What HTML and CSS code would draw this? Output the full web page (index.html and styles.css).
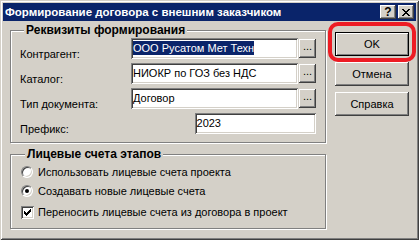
FILE: index.html
```html
<!DOCTYPE html>
<html lang="ru">
  <head>
    <meta charset="UTF-8" />
    <title>Формирование договора с внешним заказчиком</title>
    <link rel="stylesheet" href="styles.css">
  </head>
  <body>
    <div class="window">
      <div class="titlebar">
        <span class="title">Формирование договора с внешним заказчиком</span>
        <div class="caption-btns">
          <div class="cbtn help">?</div>
          <div class="cbtn">
            <svg width="8" height="7" viewBox="0 0 8 7" shape-rendering="crispEdges">
              <path fill="#000" d="M0 0h2v1H0zM6 0h2v1H6zM1 1h2v1H1zM5 1h2v1H5zM2 2h4v1H2zM3 3h2v1H3zM2 4h4v1H2zM1 5h2v1H1zM5 5h2v1H5zM0 6h2v1H0zM6 6h2v1H6z"/>
            </svg>
          </div>
        </div>
      </div>

      <div class="content">
        <div class="main">
          <!-- реквизиты -->
          <fieldset class="group group-req">
            <legend>Реквизиты формирования</legend>
            <div class="row">
              <label class="lbl">Контрагент:</label>
              <div class="edit"><span class="sel">ООО Русатом Мет Техн</span></div>
              <div class="dots">...</div>
            </div>
            <div class="row">
              <label class="lbl">Каталог:</label>
              <div class="edit">НИОКР по ГОЗ без НДС</div>
              <div class="dots">...</div>
            </div>
            <div class="row">
              <label class="lbl">Тип документа:</label>
              <div class="edit">Договор</div>
              <div class="dots">...</div>
            </div>
            <div class="row">
              <label class="lbl">Префикс:</label>
              <div class="edit edit-short">2023</div>
            </div>
          </fieldset>

          <!-- лицевые счета -->
          <fieldset class="group group-acc">
            <legend>Лицевые счета этапов</legend>
            <div class="opt opt-first">
              <span class="radio"></span>
              <span>Использовать лицевые счета проекта</span>
            </div>
            <div class="opt">
              <span class="radio on"></span>
              <span>Создавать новые лицевые счета</span>
            </div>
            <div class="opt opt-check">
              <span class="check">
                <svg width="7" height="7" viewBox="0 0 7 7" shape-rendering="crispEdges">
                  <path fill="#000" d="M6 0h1v1H6zM5 1h2v1H5zM0 2h1v1H0zM4 2h3v1H4zM0 3h2v1H0zM3 3h3v1H3zM0 4h5v1H0zM1 5h3v1H1zM2 6h1v1H2z"/>
                </svg>
              </span>
              <span>Переносить лицевые счета из договора в проект</span>
            </div>
          </fieldset>
        </div>

        <div class="side">
          <div class="btn default">OK</div>
          <div class="btn">Отмена</div>
          <div class="btn">Справка</div>
        </div>
      </div>

      <div class="mark"></div>
    </div>
  </body>
</html>
```

FILE: styles.css
```css
* {
  box-sizing: border-box;
}
body {
  margin: 0;
  background: #d4d0c8;
  font-family: "Liberation Sans", Arial, sans-serif;
  font-size: 11px;
  color: #000;
}
.window {
  position: relative;
  width: 419px;
  height: 240px;
  padding: 3px;
  background: #d4d0c8;
  box-shadow: inset 1px 1px #d4d0c8, inset -1px -1px #404040,
    inset 2px 2px #fff, inset -2px -2px #808080;
}

/* title bar */
.titlebar {
  height: 18px;
  background: #0a246a;
  display: flex;
  align-items: center;
  padding: 0 2px;
}
.title {
  flex: 1;
  color: #fff;
  font-weight: bold;
  font-size: 11.5px;
  white-space: nowrap;
}
.caption-btns {
  display: flex;
  gap: 2px;
}
.cbtn {
  width: 16px;
  height: 14px;
  background: #d4d0c8;
  display: flex;
  align-items: center;
  justify-content: center;
  box-shadow: inset -1px -1px #404040, inset 1px 1px #fff,
    inset -2px -2px #808080, inset 2px 2px #d4d0c8;
}
.help {
  font-weight: bold;
  font-size: 12px;
  line-height: 12px;
}

/* layout */
.content {
  display: flex;
  padding: 3px 0 0 7px;
}
.main {
  width: 317px;
}
.side {
  margin: 8px 0 0 8px;
  display: flex;
  flex-direction: column;
  gap: 6px;
}

/* group boxes */
.group {
  margin: 0;
  min-width: 0;
  width: 316px;
  border: 1px solid #808080;
  box-shadow: inset 1px 1px #fff, 1px 1px #fff;
}
.group legend {
  margin-left: 4px;
  padding: 0 2px;
  font-weight: bold;
  font-size: 12px;
  line-height: 13px;
  background: #d4d0c8;
}
.group-req {
  height: 119px;
  padding: 1px 9px 0 9px;
}
.group-acc {
  height: 81px;
  margin-top: 5px;
  padding: 5px 9px 0 10px;
}

.row {
  display: flex;
  align-items: flex-start;
  height: 21px;
}
.row + .row {
  margin-top: 4px;
}
.lbl {
  width: 111px;
  padding-top: 10px;
  line-height: 13px;
  white-space: nowrap;
}
.edit {
  width: 167px;
  height: 21px;
  padding: 3px 1px 0 2px;
  line-height: 14px;
  background: #fff;
  white-space: nowrap;
  overflow: hidden;
  box-shadow: inset 1px 1px #808080, inset -1px -1px #fff,
    inset 2px 2px #404040, inset -2px -2px #d4d0c8;
}
.edit-short {
  width: 122px;
  margin-left: 64px;
}
.sel {
  display: inline-block;
  background: #0a246a;
  color: #fff;
}
.dots {
  width: 17px;
  height: 19px;
  margin: 1px 0 0 1px;
  padding-bottom: 4px;
  display: flex;
  align-items: center;
  justify-content: center;
  line-height: 13px;
  box-shadow: inset -1px -1px #404040, inset 1px 1px #fff,
    inset -2px -2px #808080;
}

/* radio / check */
.opt {
  display: flex;
  align-items: center;
  gap: 5px;
  height: 12px;
  line-height: 13px;
  white-space: nowrap;
}
.opt + .opt {
  margin-top: 7px;
}
.opt-check {
  height: 13px;
  gap: 4px;
}
.opt + .opt-check {
  margin-top: 9px;
}
.radio {
  width: 12px;
  height: 12px;
  border-radius: 50%;
  background: #fff;
  border: 1px solid;
  border-color: #808080 #fff #fff #808080;
  box-shadow: inset 1px 1px #404040, inset -1px -1px #d4d0c8;
  display: flex;
  align-items: center;
  justify-content: center;
}
.radio.on::after {
  content: "";
  width: 4px;
  height: 4px;
  border-radius: 50%;
  background: #000;
}
.check {
  width: 13px;
  height: 13px;
  background: #fff;
  display: flex;
  align-items: center;
  justify-content: center;
  box-shadow: inset 1px 1px #808080, inset -1px -1px #fff,
    inset 2px 2px #404040, inset -2px -2px #d4d0c8;
}

/* buttons */
.btn {
  width: 74px;
  height: 24px;
  display: flex;
  align-items: center;
  justify-content: center;
  box-shadow: inset -1px -1px #404040, inset 1px 1px #fff,
    inset -2px -2px #808080, inset 2px 2px #d4d0c8;
}
.btn.default {
  border: 1px solid #000;
  box-shadow: inset 1px 1px #fff, inset -1px -1px #808080;
}

/* red annotation around OK */
.mark {
  position: absolute;
  left: 328px;
  top: 22px;
  width: 88px;
  height: 40px;
  border: 4px solid #ed1c24;
  border-radius: 10px;
}
```
